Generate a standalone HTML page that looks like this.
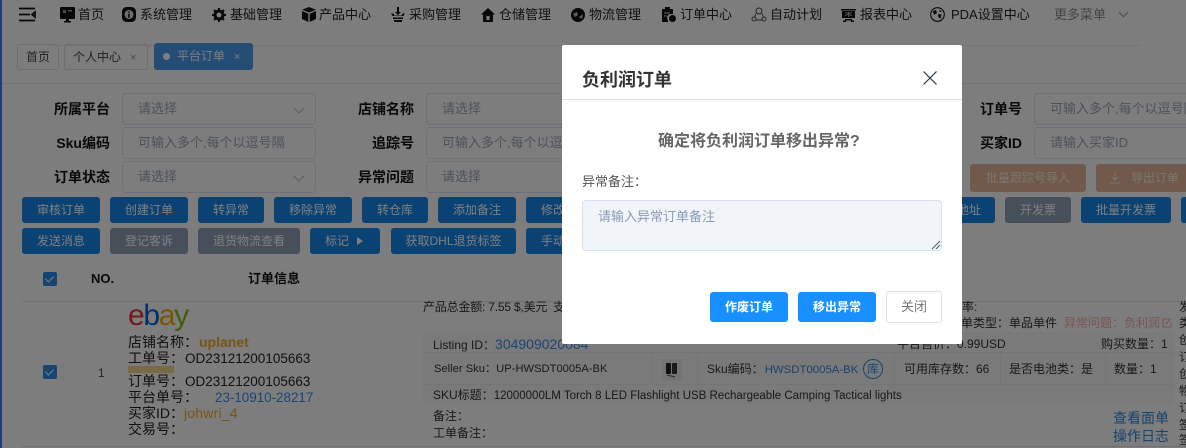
<!DOCTYPE html>
<html lang="zh"><head><meta charset="utf-8"><title>负利润订单</title>
<style>
*{box-sizing:border-box}
html,body{margin:0;padding:0}
body{width:1186px;height:448px;overflow:hidden;position:relative;background:#fbfbfb;font-family:"Liberation Sans","Noto Sans CJK SC",sans-serif;color:#222;font-size:13px}
.t{position:absolute;white-space:nowrap;line-height:16px;height:16px}
.b{position:absolute;background:#1684e8;color:#fff;border-radius:3px;text-align:center;white-space:nowrap;overflow:hidden;font-size:12px;line-height:26px;height:26px}
.g{background:#8f9fb5}
.i{position:absolute;height:32px;border:1px solid #dbe0ee;border-radius:4px;background:#fbfbfb;color:#9aa3b5;font-size:13px;line-height:30px;padding-left:15px;white-space:nowrap;overflow:hidden}
.l{font-weight:bold;font-size:14px;color:#111;text-align:right}
.n{font-size:13px;color:#222}
.ar{position:absolute;right:12px;top:10px;width:8px;height:8px;border-right:1px solid #bbb;border-bottom:1px solid #bbb;transform:rotate(45deg)}
svg{position:absolute;display:block}
.s{font-size:12px;color:#333}
.o{font-size:14px;color:#222}
.d{position:absolute;background:#e5e7ef}
.v{position:absolute;top:353px;height:31px;width:1px;background:#ebebef}
.cb{position:absolute;width:14px;height:14px;background:#2f8ae6;border-radius:2px}
.cb:after{content:"";position:absolute;left:4px;top:2px;width:4px;height:7px;border:solid #fff;border-width:0 1.4px 1.4px 0;transform:rotate(45deg)}
#ov{position:absolute;left:0;top:0;width:1186px;height:448px;background:rgba(0,0,0,.5)}
#m{position:absolute;left:562px;top:45px;width:400px;height:299px;background:#fff;border-radius:2px}
#m .t{position:absolute}
#m .b{background:#1890ff}
</style></head>
<body>
<div style="position:absolute;left:0;top:0;width:2px;height:448px;background:#3a7af0"></div>
<div class="d" style="left:50px;top:45px;width:1090px;height:1px;background:#e9e9e9"></div>
<div style="position:absolute;left:2px;top:83px;width:1184px;height:1px;background:#e6e6e6"></div>

<!-- nav -->
<svg style="left:19px;top:7px" width="17" height="15" viewBox="0 0 17 15"><path d="M0 1.5h16M0 7.5h11M0 13.5h16M16 5v5l-3-2.500z" stroke="#111" stroke-width="1.700" fill="none"/></svg>
<svg style="left:60px;top:7px" width="15" height="16" viewBox="0 0 15 16"><path d="M1 0h13a1 1 0 0 1 1 1v10a1 1 0 0 1-1 1H9v2h2v1.500H4V14h2v-2H1a1 1 0 0 1-1-1V1a1 1 0 0 1 1-1z" fill="#111"/><path d="M8 3h4v1.500H8zM3 3h3v3H3z" fill="#999"/></svg>
<span class="t n" style="left:78px;top:7px">首页</span>
<svg style="left:122px;top:7px" width="14" height="15" viewBox="0 0 14 15"><rect width="14" height="15" rx="4.500" fill="#111"/><circle cx="7" cy="7.500" r="4.500" fill="#ddd"/><path d="M6.200 4.500h1.600v1.300H6.200zM6.200 6.800h1.600v4H6.200z" fill="#111"/></svg>
<span class="t n" style="left:140px;top:7px">系统管理</span>
<svg style="left:212px;top:8px" width="14" height="14" viewBox="0 0 14 14"><circle cx="7" cy="7" r="4" fill="none" stroke="#111" stroke-width="3"/><path d="M7 0v14M0 7h14M2 2l10 10M12 2L2 12" stroke="#111" stroke-width="2" stroke-dasharray="2.500 9 2.500 0"/></svg>
<span class="t n" style="left:230px;top:7px">基础管理</span>
<svg style="left:302px;top:7px" width="14" height="15" viewBox="0 0 14 15"><path d="M7 0l7 2.800L7 5.500 0 2.800zM0 4l6.300 2.600V15L0 12zM14 4L7.700 6.600V15l6.300-3z" fill="#111"/></svg>
<span class="t n" style="left:319px;top:7px">产品中心</span>
<svg style="left:391px;top:7px" width="14" height="15" viewBox="0 0 14 15"><path d="M6 0h2v5h2L7 8 4 5h2zM0 6l3 1v1.500h8V7l3-1-1.500 3h-11zM2 10.500h10V12H2zM3 13h8v2H3z" fill="#111"/></svg>
<span class="t n" style="left:409px;top:7px">采购管理</span>
<svg style="left:481px;top:8px" width="14" height="14" viewBox="0 0 14 14"><path d="M7 0l7 6.500h-2V14H2V6.500H0zM5.500 8v4h3V8z" fill="#111" fill-rule="evenodd"/></svg>
<span class="t n" style="left:499px;top:7px">仓储管理</span>
<svg style="left:571px;top:8px" width="14" height="14" viewBox="0 0 14 14"><circle cx="7" cy="7" r="7" fill="#111"/><path d="M2 6l4-2 1 3-3 2zM8 9l4-3-1 5z" fill="#bbb"/></svg>
<span class="t n" style="left:589px;top:7px">物流管理</span>
<svg style="left:661px;top:7px" width="15" height="15" viewBox="0 0 15 15"><path d="M1 2h3V0h5v2h3v5H9.500A4 4 0 0 0 7 13.500V15H1z" fill="#111"/><path d="M3 6h6M3 9h3" stroke="#aaa" stroke-width="1.200"/><circle cx="11.500" cy="11.500" r="3.500" fill="#111"/></svg>
<span class="t n" style="left:680px;top:7px">订单中心</span>
<svg style="left:751px;top:7px" width="16" height="15" viewBox="0 0 16 15" fill="none" stroke="#444" stroke-width=".9"><circle cx="8" cy="4" r="3"/><circle cx="3" cy="12" r="2"/><path d="M5 6.500A5 5 0 0 0 4 10M11 6.500a5 5 0 0 1 1 3M5 13h6"/><circle cx="13" cy="12" r="2"/></svg>
<span class="t n" style="left:770px;top:7px">自动计划</span>
<svg style="left:841px;top:8px" width="15" height="14" viewBox="0 0 15 14"><path d="M0 1h15v1.500H0zM1 3h13v7H1zM4 11h7v1.500H4zM2 12.500h3V14H2zM10 12.500h3V14h-3z" fill="#111"/><path d="M4 5h7M7.500 4v5M4 8l3.500-2L11 8" stroke="#aaa" stroke-width="1" fill="none"/></svg>
<span class="t n" style="left:860px;top:7px">报表中心</span>
<svg style="left:930px;top:7px" width="15" height="15" viewBox="0 0 15 15"><circle cx="7.500" cy="7.500" r="6.800" fill="none" stroke="#111" stroke-width="1.100"/><path d="M3 4l3-1 1 3-3 2zM8 7l3.500.500-1 4-2-1zM9 2.500l3 2-2 .5z" fill="#111"/></svg>
<span class="t n" style="left:951px;top:7px">PDA设置中心</span>
<span class="t n" style="left:1054px;top:7px;color:#888">更多菜单</span>
<div style="position:absolute;left:1120px;top:9px;width:7px;height:7px;border-right:1px solid #999;border-bottom:1px solid #999;transform:rotate(45deg)"></div>

<!-- tabs -->
<div style="position:absolute;left:17px;top:44px;width:42px;height:26px;border:1px solid #dcdcdc;border-radius:3px;text-align:center;line-height:24px;font-size:12px;color:#444">首页</div>
<div style="position:absolute;left:64px;top:44px;width:84px;height:26px;border:1px solid #dcdcdc;border-radius:3px;line-height:24px;font-size:12px;color:#444;padding-left:8px">个人中心<span style="margin-left:9px;color:#999;font-size:11px">×</span></div>
<div style="position:absolute;left:154px;top:43px;width:99px;height:27px;background:#4a98ea;border-radius:3px;line-height:26px;font-size:12px;color:#fff;padding-left:23px">平台订单<span style="margin-left:9px;font-size:11px">×</span><span style="position:absolute;left:9px;top:10px;width:7px;height:7px;border-radius:50%;background:#fff"></span></div>

<!-- form -->
<span class="t l" style="left:30px;width:80px;top:101px">所属平台</span>
<div class="i" style="left:122px;top:93px;width:194px">请选择<span class="ar"></span></div>
<span class="t l" style="left:334px;width:80px;top:101px">店铺名称</span>
<div class="i" style="left:426px;top:93px;width:194px">请选择</div>
<span class="t l" style="left:942px;width:80px;top:101px">订单号</span>
<div class="i" style="left:1034px;top:93px;width:193px">可输入多个,每个以逗号隔开</div>
<span class="t l" style="left:30px;width:80px;top:135px">Sku编码</span>
<div class="i" style="left:122px;top:127px;width:194px">可输入多个,每个以逗号隔</div>
<span class="t l" style="left:334px;width:80px;top:135px">追踪号</span>
<div class="i" style="left:426px;top:127px;width:194px">可输入多个,每个以逗号隔</div>
<span class="t l" style="left:942px;width:80px;top:135px">买家ID</span>
<div class="i" style="left:1034px;top:127px;width:193px">请输入买家ID</div>
<span class="t l" style="left:30px;width:80px;top:169px">订单状态</span>
<div class="i" style="left:122px;top:161px;width:194px">请选择<span class="ar"></span></div>
<span class="t l" style="left:334px;width:80px;top:169px">异常问题</span>
<div class="i" style="left:426px;top:161px;width:194px">请选择</div>
<div class="b" style="left:970px;top:164px;width:116px;height:28px;background:#e2b596;line-height:28px;color:#f8ece2">批量跟踪号导入</div>
<div class="b" style="left:1096px;top:164px;width:100px;height:28px;background:#e2b596;line-height:28px;color:#f8ece2;text-align:left;padding-left:35px">导出订单
<svg style="left:13px;top:8px" width="12" height="12" viewBox="0 0 12 12"><path d="M6 0v8M3 5l3 3 3-3M1 11h10" stroke="#f8ece2" fill="none"/></svg></div>

<!-- buttons -->
<div class="b" style="left:22px;top:197px;width:78px">审核订单</div>
<div class="b" style="left:110px;top:197px;width:78px">创建订单</div>
<div class="b" style="left:198px;top:197px;width:66px">转异常</div>
<div class="b" style="left:274px;top:197px;width:78px">移除异常</div>
<div class="b" style="left:362px;top:197px;width:66px">转仓库</div>
<div class="b" style="left:438px;top:197px;width:78px">添加备注</div>
<div class="b" style="left:526px;top:197px;width:50px;text-align:left;padding-left:15px">修改</div>
<div class="b" style="left:940px;top:197px;width:55px;text-align:right;padding-right:14px">地址</div>
<div class="b g" style="left:1005px;top:197px;width:66px">开发票</div>
<div class="b" style="left:1081px;top:197px;width:90px">批量开发票</div>
<div class="b" style="left:1181px;top:197px;width:20px"></div>
<div class="b" style="left:22px;top:228px;width:78px">发送消息</div>
<div class="b g" style="left:110px;top:228px;width:78px">登记客诉</div>
<div class="b g" style="left:198px;top:228px;width:102px">退货物流查看</div>
<div class="b" style="left:310px;top:228px;width:70px;text-align:left;padding-left:15px">标记<span style="position:absolute;left:47px;top:9px;border-left:6px solid #fff;border-top:4.500px solid transparent;border-bottom:4.500px solid transparent"></span></div>
<div class="b" style="left:391px;top:228px;width:125px">获取DHL退货标签</div>
<div class="b" style="left:526px;top:228px;width:50px;text-align:left;padding-left:15px">手动</div>

<!-- table -->
<div class="d" style="left:22px;top:301px;width:1164px;height:1px;background:#dfe1ea"></div>
<div class="cb" style="left:43px;top:272px"></div>
<span class="t" style="left:91px;top:271px;font-weight:bold;font-size:13px;color:#111">NO.</span>
<span class="t" style="left:248px;top:271px;font-weight:bold;font-size:13px;color:#111">订单信息</span>
<div class="cb" style="left:43px;top:365px"></div>
<span class="t n" style="left:98px;top:365px;color:#444;font-size:12px">1</span>

<!-- logo -->
<span style="position:absolute;left:128px;top:298px;font-size:30px;line-height:36px;letter-spacing:-1.300px;font-family:'Liberation Sans',sans-serif"><span style="color:#e53238">e</span><span style="color:#0064d2">b</span><span style="color:#f5af02">a</span><span style="color:#86b817">y</span></span>

<span class="t o" style="left:128px;top:334px">店铺名称：<b style="color:#f0a92e;font-weight:bold;margin-left:1px">uplanet</b></span>
<span class="t o" style="left:128px;top:350px">工单号：<span style="font-size:13.500px;margin-left:1px">OD23121200105663</span></span>
<div style="position:absolute;left:128px;top:366px;width:46px;height:7px;background:#f3d58e"></div>
<span class="t o" style="left:128px;top:373px">订单号：<span style="font-size:13.500px;margin-left:1px">OD23121200105663</span></span>
<span class="t o" style="left:128px;top:389px">平台单号：<b style="color:#3a8ae8;font-weight:normal;font-size:13.400px;margin-left:17px">23-10910-28217</b></span>
<span class="t o" style="left:128px;top:405px">买家ID：<b style="color:#f0a92e;font-weight:normal;letter-spacing:.2px">johwri_4</b></span>
<span class="t o" style="left:128px;top:421px">交易号：</span>

<span class="t s" style="left:423px;top:299px;letter-spacing:-.2px">产品总金额: 7.55 $,美元</span>
<span class="t s" style="left:553px;top:299px">支</span>
<span class="t s" style="left:962px;top:299px">率:</span>
<span class="t s" style="left:961px;top:315px">单类型：单品单件</span>
<span class="t s" style="left:1064px;top:315px;color:#f4a9a9">异常问题：负利润</span>
<svg style="left:1162px;top:318px" width="10" height="10" viewBox="0 0 10 10"><path d="M8 1H1v8h8V4M4 6l5-5" stroke="#f4a9a9" fill="none"/></svg>

<!-- sku panel -->
<div style="position:absolute;left:423px;top:332px;width:751px;height:72px;background:#f4f4f6;border-radius:6px"></div>
<div class="d" style="left:423px;top:352px;width:751px;height:1px;background:#ebebef"></div>
<div class="d" style="left:423px;top:384px;width:751px;height:1px;background:#ebebef"></div>
<div class="v" style="left:651px"></div><div class="v" style="left:697px"></div><div class="v" style="left:894px"></div><div class="v" style="left:1000px"></div><div class="v" style="left:1105px"></div>
<span class="t s" style="left:433px;top:336px">Listing ID：<span style="color:#3a8ae8;font-size:14px">304909020084</span></span>
<span class="t s" style="left:897px;top:336px">平台售价：0.99USD</span>
<span class="t s" style="left:1101px;top:336px">购买数量：1</span>
<span class="t s" style="left:434px;top:361px;font-size:11.200px">Seller Sku：UP-HWSDT0005A-BK</span>
<div style="position:absolute;left:662px;top:359px;width:20px;height:22px;background:#e8e8e8"></div>
<svg style="left:665px;top:362px" width="14" height="16" viewBox="0 0 14 16"><rect x="1" y="1" width="5" height="11" rx="1" fill="#222"/><rect x="7" y="1" width="5" height="11" rx="1" fill="#333"/><path d="M2 13l8 2" stroke="#555"/></svg>
<span class="t s" style="left:707px;top:361px">Sku编码：<span style="color:#3a7fd5;font-size:11.400px;margin-left:1px">HWSDT0005A-BK</span></span>
<div style="position:absolute;left:863px;top:359px;width:20px;height:20px;border:1px solid #2f8ae6;border-radius:50%;color:#2f8ae6;font-size:12px;text-align:center;line-height:18px">库</div>
<span class="t s" style="left:904px;top:361px">可用库存数：66</span>
<span class="t s" style="left:1009px;top:361px">是否电池类：是</span>
<span class="t s" style="left:1114px;top:361px">数量：1</span>
<span class="t s" style="left:433px;top:387px">SKU标题：<span style="font-size:11.500px">12000000LM Torch 8 LED Flashlight USB Rechargeable Camping Tactical lights</span></span>
<span class="t s" style="left:433px;top:408px">备注：</span>
<span class="t s" style="left:433px;top:425px">工单备注：</span>
<span class="t" style="left:1113px;top:410px;color:#2f86d8;font-size:14px">查看面单</span>
<span class="t" style="left:1113px;top:428px;color:#2f86d8;font-size:14px">操作日志</span>
<span class="t s" style="left:1179px;top:299px">发</span>
<span class="t s" style="left:1179px;top:315px">类</span>
<span class="t s" style="left:1179px;top:332px">创</span>
<span class="t s" style="left:1179px;top:349px">订</span>
<span class="t s" style="left:1179px;top:366px">创</span>
<span class="t s" style="left:1179px;top:383px">物</span>
<span class="t s" style="left:1179px;top:400px">订</span>
<span class="t s" style="left:1179px;top:417px">签</span>
<span class="t s" style="left:1179px;top:432px">签</span>
<div class="d" style="left:22px;top:446px;width:1164px;height:1px;background:#dfe1ea"></div>

<div id="ov"></div>

<!-- modal -->
<div id="m">
<span class="t" style="left:20px;top:25px;font-size:18px;line-height:20px;height:20px;font-weight:bold;color:#333">负利润订单</span>
<svg style="left:361px;top:26px" width="14" height="14" viewBox="0 0 14 14"><path d="M.5.5l13 13M13.500.5l-13 13" stroke="#2b3648" stroke-width="1.200" fill="none"/></svg>
<div style="position:absolute;left:0;top:54px;width:400px;height:1px;background:#dfe4ec"></div>
<span class="t" style="left:96px;top:87px;font-size:16px;line-height:20px;height:20px;font-weight:bold;color:#666">确定将负利润订单移出异常?</span>
<span class="t" style="left:20px;top:129px;color:#555">异常备注：</span>
<div style="position:absolute;left:20px;top:155px;width:360px;height:51px;background:#f1f4f9;border:1px solid #d8dfee;border-radius:4px"></div>
<span class="t" style="left:36px;top:164px;color:#8a9bb8">请输入异常订单备注</span>
<svg style="left:368px;top:194px" width="11" height="11" viewBox="0 0 11 11"><path d="M2 10l8-8M6 10l4-4" stroke="#555" stroke-width=".9"/></svg>
<div class="b" style="left:148px;top:247px;width:78px;height:30px;line-height:30px;font-weight:bold">作废订单</div>
<div class="b" style="left:236px;top:247px;width:78px;height:30px;line-height:30px;font-weight:bold">移出异常</div>
<div class="b" style="left:324px;top:246px;width:56px;height:32px;line-height:30px;background:#fff;border:1px solid #dde1ea;color:#777;font-size:13px">关闭</div>
</div>
</body></html>
